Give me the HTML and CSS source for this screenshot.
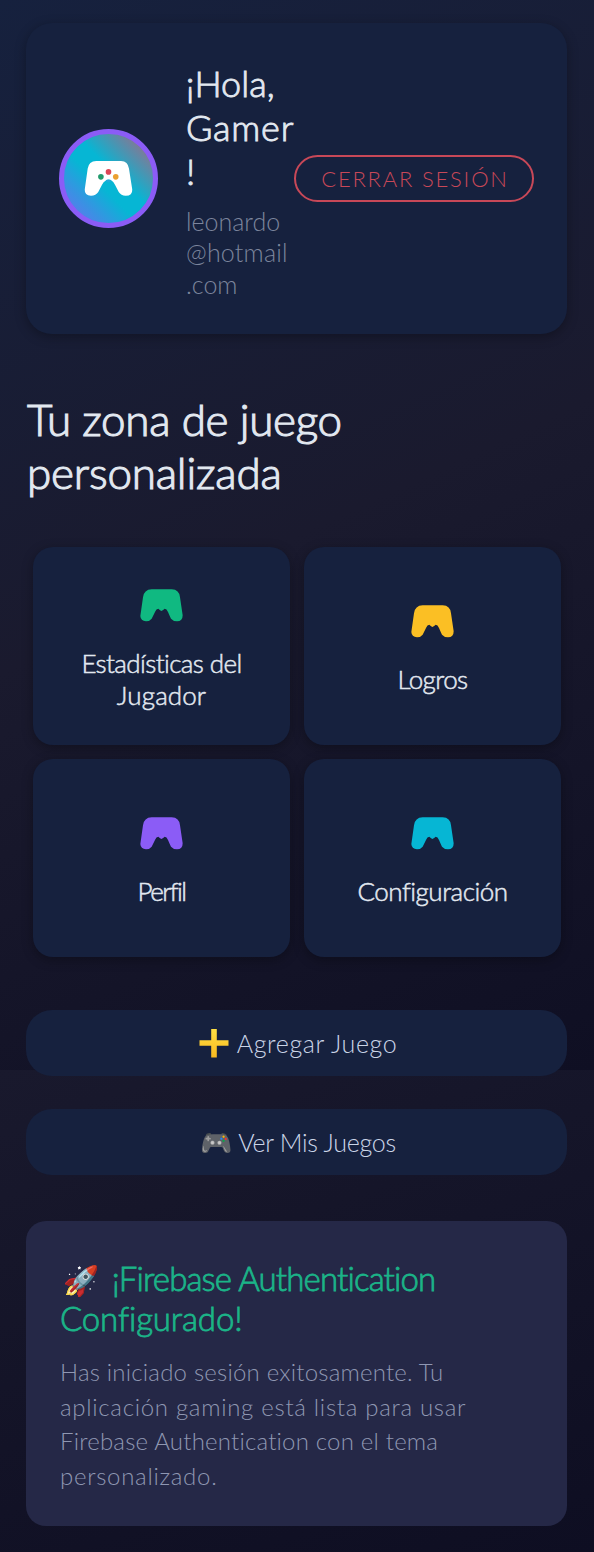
FILE: index.html
```html
<!DOCTYPE html>
<html lang="es">
<head>
<meta charset="utf-8">
<title>Zona Gamer</title>
<link rel="stylesheet" href="styles.css">
</head>
<body>
<svg class="defs" aria-hidden="true">
  <symbol id="pad" viewBox="16 5 159 159"><path d="M66 30H126Q149 31 151 54L159 108Q159 126 142 126Q131 126 124 118Q120 110 115 98Q111 88 105 88Q101 92 95 95Q90 92 86 88Q80 88 76 98L66 118Q60 126 49 126Q33 125 32 110L40 54Q43 31 66 30Z"/></symbol>
</svg>
<main class="page">
  <header class="card header">
    <div class="avatar">
      <svg viewBox="27 26 300 300"><path fill="#fff" d="M140 123H215Q236 124 239 146L249 209Q250 228 229 228Q215 228 208 217L197 196Q192 186 187 183Q183 179 177 179Q171 179 168 183Q162 186 157 196L146 217Q139 228 124 228Q104 227 105 209L114 146Q117 124 140 123Z"/><circle cx="177" cy="156" r="8.5" fill="#dc4655"/><circle cx="154" cy="171" r="8.500" fill="#219b6d"/><circle cx="199" cy="171" r="8.500" fill="#eba030"/><path d="M168 184Q171 179 177 180Q183 179 186 184L177 188Z" fill="#22a9d8"/></svg>
    </div>
    <div class="who">
      <h1 class="hello"><span class="line hola">¡Hola,</span><span class="line gamer">Gamer</span><span class="line">!</span></h1>
      <p class="email"><span class="line">leonardo</span><span class="line host">@hotmail</span><span class="line">.com</span></p>
    </div>
    <button class="logout">CERRAR SESIÓN</button>
  </header>
  <h2 class="title"><span class="line t1">Tu zona de juego</span><span class="line t2">personalizada</span></h2>
  <section class="grid">
    <div class="card tile green"><svg><use href="#pad"/></svg><p><span class="line stats">Estadísticas del</span><span class="line jug">Jugador</span></p></div>
    <div class="card tile amber"><svg><use href="#pad"/></svg><p class="logros">Logros</p></div>
    <div class="card tile purple"><svg><use href="#pad"/></svg><p class="perfil">Perfil</p></div>
    <div class="card tile cyan"><svg><use href="#pad"/></svg><p class="config">Configuración</p></div>
  </section>
  <div class="actions">
    <button class="action"><svg class="plus" viewBox="0 0 30 30"><defs><linearGradient id="gold" x2="0" y2="1"><stop stop-color="#ffe044"/><stop offset="1" stop-color="#f9b91f"/></linearGradient></defs><path fill="url(#gold)" d="M12.2 1h5.6v11.2H29.500v5.600H17.800V29.500H12.200V17.800H.5V12.200H12.200Z"/></svg><span class="add">Agregar Juego</span></button>
    <button class="action"><span class="emoji">🎮</span><span class="view">Ver Mis Juegos</span></button>
  </div>
  <section class="info">
    <h3><span class="line fb"><span class="rocket">🚀</span>¡Firebase Authentication</span><span class="line conf">Configurado!</span></h3>
    <p><span class="line b1">Has iniciado sesión exitosamente. Tu</span><span class="line b2">aplicación gaming está lista para usar</span><span class="line b1">Firebase Authentication con el tema</span><span class="line b2">personalizado.</span></p>
  </section>
</main>
</body>
</html>
```

FILE: styles.css
```css
* { box-sizing: border-box; margin: 0; padding: 0; }
body {
  height: 1552px;
  font-family: Lato, sans-serif;
  font-weight: 300;
  color: #e2e8f0;
  font-variant-ligatures: none;
  background:
    linear-gradient(160deg, #19192d, #0e0e22) 0 1070px / 100% 482px no-repeat,
    linear-gradient(155deg, #16213e 0%, #1a1a2e 50%, #0f0f23 100%) 0 0 / 100% 1070px no-repeat,
    #0f0f23;
}
.defs { display: none; }
.page { padding: 23px 27px 0 26px; }
.line { display: block; white-space: nowrap; }
.card { background: #16213e; box-shadow: 0 3px 12px rgba(0, 0, 0, .3); }

.header { display: flex; align-items: center; height: 311px; padding: 33px; border-radius: 26px; }
.avatar {
  flex: none; width: 99px; height: 99px; margin-right: 28px;
  border-radius: 50%; border: 5px solid #8b5cf6;
  background: linear-gradient(45deg, #7468f4 0%, #06b6d4 42%, #06b6d4 56%, #b4607c 100%);
}
.avatar svg { display: block; width: 99px; height: 99px; margin: -5px; }
.who { flex: none; width: 108px; padding-top: 4px; }
.hello { font-size: 36px; line-height: 44px; font-weight: 300; -webkit-text-stroke: .9px; }
.hola { letter-spacing: .1px; }
.gamer { letter-spacing: .8px; }
.email { margin-top: 13px; font-size: 25px; line-height: 31.5px; color: #7c859c; }
.host { letter-spacing: .2px; }
.logout {
  flex: none; width: 240px; height: 47px; border: 2px solid #c84858; border-radius: 24px;
  background: none; color: #c84858; font: 300 22px Lato, sans-serif; letter-spacing: 1.8px; white-space: nowrap;
  padding: 0 0 0 2px;
}

.title { margin: 59px 0 0 1px; font-size: 44px; line-height: 53px; font-weight: 300; -webkit-text-stroke: 1.1px; }
.t1 { letter-spacing: -.35px; }
.t2 { letter-spacing: -.2px; }

.grid { display: grid; grid-template-columns: 257px 257px; grid-auto-rows: 198px; gap: 14px; margin: 48px 0 0 7px; }
.tile { display: flex; flex-direction: column; align-items: center; justify-content: center; gap: 14px; border-radius: 20px; text-align: center; }
.tile svg { width: 53px; height: 53px; fill: currentColor; }
.tile p { font-size: 26px; line-height: 31.5px; color: #e2e8f0; -webkit-text-stroke: .5px; }
.green { color: #10b981; }
.amber { color: #fbbf24; }
.purple { color: #8b5cf6; }
.cyan { color: #06b6d4; }
.stats { letter-spacing: -.6px; }
.jug { letter-spacing: .1px; }
.tile .logros { letter-spacing: -.6px; }
.tile .perfil { letter-spacing: -1.600px; }
.tile .config { letter-spacing: -.5px; }

.actions { display: grid; gap: 33px; margin-top: 53px; }
.action {
  display: flex; align-items: center; justify-content: center; height: 66px; border: 0; border-radius: 26px;
  background: #16213e; color: #cbd5e8; font: 300 25px Lato, sans-serif; padding-left: 3px;
}
.plus { width: 30px; height: 30px; margin-right: 8px; }
.emoji { width: 31px; margin-right: 7px; font-size: 26px; line-height: 30px; }
.add { letter-spacing: .6px; }
.view { letter-spacing: -.27px; }

.info { height: 305px; margin-top: 46px; padding: 37px 34px; border-radius: 20px; background: #252847; }
.info h3 { font-size: 33px; line-height: 40px; font-weight: 300; color: #1bb488; -webkit-text-stroke: .8px; }
.fb { letter-spacing: -.85px; }
.conf { letter-spacing: -.15px; }
.rocket { display: inline-block; width: 52px; padding-left: 3px; font-size: 29px; letter-spacing: 0; line-height: 30px; }
.info p { margin-top: 17px; font-size: 24px; line-height: 34.7px; color: #8f97b2; }
.b1 { letter-spacing: .2px; }
.b2 { letter-spacing: .7px; }
```
